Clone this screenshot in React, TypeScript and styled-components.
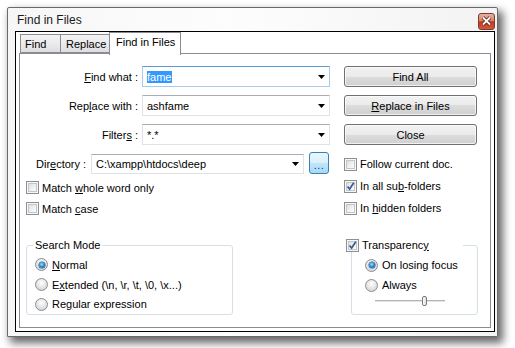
import styled, { createGlobalStyle } from "styled-components";

const GlobalStyle = createGlobalStyle`
  html, body {
    margin: 0;
    padding: 0;
    background: #ffffff;
  }
  body {
    font-family: "Liberation Sans", Arial, sans-serif;
    font-size: 11px;
    color: #000000;
  }
  * {
    box-sizing: border-box;
  }
`;

const Screen = styled.div`
  width: 515px;
  height: 348px;
  padding: 7px 0 0 7px;
  overflow: hidden;
`;

const Window = styled.div`
  width: 491px;
  height: 330px;
  display: flex;
  flex-direction: column;
  border: 1px solid #6a6a6a;
  border-radius: 2px 2px 0 0;
  background: linear-gradient(90deg, #f6f6f6 0%, #fdfdfd 45%, #f3f3f3 100%);
  box-shadow: 4px 5px 8px 1px rgba(0, 0, 0, 0.6);
`;

const TitleBar = styled.div`
  height: 23px;
  display: flex;
  align-items: center;
  justify-content: space-between;
  padding: 0 2px 0 9px;
`;

const Title = styled.div`
  font-size: 12px;
  color: #1a1a1a;
  margin-top: 1px;
`;

const CloseButton = styled.div`
  width: 17px;
  height: 17px;
  margin-top: 3px;
  display: flex;
  align-items: center;
  justify-content: center;
  border: 1px solid #7d3a2e;
  border-radius: 3px;
  background: linear-gradient(
    #eab1a2 0%,
    #dc806a 45%,
    #c4391c 52%,
    #d2583a 100%
  );
`;

const Frame = styled.div`
  flex: 1;
  margin: 0 2px 4px 7px;
  border: 1px solid #000000;
  background: #ffffff;
  display: flex;
  flex-direction: column;
`;

const TabStrip = styled.div`
  height: 21px;
  padding-left: 4px;
  display: flex;
  align-items: flex-end;
  position: relative;
  z-index: 1;
`;

const Tab = styled.div<{ $active?: boolean; $width: number; $pad: number }>`
  width: ${(p) => p.$width}px;
  height: ${(p) => (p.$active ? 23 : 19)}px;
  margin-left: ${(p) => (p.$active ? -1 : 0)}px;
  margin-bottom: ${(p) => (p.$active ? -2 : 0)}px;
  padding-left: ${(p) => p.$pad}px;
  padding-top: 3px;
  border: 1px solid #898c95;
  border-bottom: ${(p) => (p.$active ? "none" : "1px solid #898c95")};
  border-right: ${(p) => (p.$active ? "1px solid #898c95" : "none")};
  background: ${(p) =>
    p.$active ? "#ffffff" : "linear-gradient(#f3f3f3 0%, #ebebeb 50%, #dedede 100%)"};
  white-space: nowrap;
  overflow: hidden;
`;

const Panel = styled.div`
  flex: 1;
  margin: 0 3px 3px 3px;
  border: 1px solid #898c95;
  background: #ffffff;
  padding-top: 12px;
  display: grid;
  grid-template-columns: 311px 134px;
  column-gap: 13px;
  align-items: start;
`;

const Column = styled.div`
  display: flex;
  flex-direction: column;
`;

const FieldRow = styled.div<{ $first?: boolean }>`
  height: 21px;
  margin-top: ${(p) => (p.$first ? 0 : 8)}px;
  display: grid;
  grid-template-columns: 118px 188px;
  column-gap: 4px;
  align-items: center;
`;

const Label = styled.div`
  text-align: right;
  white-space: nowrap;
`;

const DirRow = styled.div`
  height: 21px;
  margin-top: 8px;
  padding-left: 16px;
  display: flex;
  align-items: center;
`;

const DirLabel = styled.div`
  width: 55px;
  white-space: nowrap;
`;

const Combo = styled.div<{ $focused?: boolean; $width?: number }>`
  width: ${(p) => (p.$width ? `${p.$width}px` : "100%")};
  height: ${(p) => (p.$width ? 20 : 21)}px;
  display: flex;
  align-items: center;
  padding-left: 4px;
  border: 1px solid ${(p) => (p.$focused ? "#a9cbe9" : "#dfe3e8")};
  border-top-color: ${(p) => (p.$focused ? "#5b9bd8" : "#abadb3")};
  background: #ffffff;
`;

const ComboText = styled.div`
  flex: 1;
  white-space: nowrap;
  overflow: hidden;
`;

const Selected = styled.span`
  background: #3399ff;
  color: #ffffff;
  padding: 1px 1px 1px 0;
`;

const ComboArrow = styled.div`
  width: 17px;
  height: 100%;
  display: flex;
  align-items: center;
  justify-content: center;
  padding-left: 1px;
`;

const BrowseButton = styled.div`
  width: 20px;
  height: 22px;
  margin-left: 5px;
  margin-top: -1px;
  display: flex;
  align-items: flex-end;
  justify-content: center;
  padding-bottom: 4px;
  border: 1px solid #3c7fb1;
  border-radius: 3px;
  background: linear-gradient(#eaf6fd 0%, #d9f0fc 50%, #bee6fd 50%, #a7d9f5 100%);
  color: #1c3a63;
  font-size: 11px;
  line-height: 8px;
  letter-spacing: 0.5px;
`;

const Button = styled.div<{ $first?: boolean }>`
  width: 133px;
  height: 21px;
  margin-top: ${(p) => (p.$first ? 0 : 8)}px;
  display: flex;
  align-items: center;
  justify-content: center;
  border: 1px solid #707070;
  border-radius: 3px;
  background: linear-gradient(#f2f2f2 0%, #ebebeb 50%, #dddddd 50%, #cfcfcf 100%);
  box-shadow: inset 0 0 0 1px rgba(255, 255, 255, 0.7);
`;

const CheckList = styled.div<{ $top: number; $indent: number }>`
  margin-top: ${(p) => p.$top}px;
  padding-left: ${(p) => p.$indent}px;
  display: flex;
  flex-direction: column;
`;

const CheckRow = styled.div<{ $height: number }>`
  height: ${(p) => p.$height}px;
  display: flex;
  align-items: center;
  gap: 3px;
  white-space: nowrap;
`;

const Box = styled.div`
  width: 13px;
  height: 13px;
  flex: none;
  border: 1px solid #8e8f8f;
  background: #f7f7f7;
  padding: 1px;
  position: relative;
`;

const BoxInner = styled.div`
  width: 100%;
  height: 100%;
  border: 1px solid #c3c6ca;
  background: linear-gradient(135deg, #dcdfe2 0%, #f0f1f2 55%, #fcfcfc 100%);
`;

const CheckMark = styled.svg`
  position: absolute;
  left: 0;
  top: 0;
`;

const RadioCircle = styled.div`
  width: 13px;
  height: 13px;
  flex: none;
  border-radius: 50%;
  border: 1px solid #8a8e94;
  background: radial-gradient(circle at 50% 35%, #ffffff 0%, #e8e8e8 45%, #c9cbce 100%);
  display: flex;
  align-items: center;
  justify-content: center;
`;

const RadioDot = styled.div`
  width: 6px;
  height: 6px;
  border-radius: 50%;
  background: radial-gradient(circle at 45% 40%, #a8e4ff 0%, #2f8fcf 45%, #0c4a8c 100%);
  box-shadow: 0 0 0 0.5px #1b4f86;
`;

const RadioRow = styled.div`
  height: 20px;
  display: flex;
  align-items: center;
  gap: 4px;
  white-space: nowrap;
`;

const GroupBox = styled.div<{ $indent: number; $width: number; $inset: number }>`
  position: relative;
  margin-top: 26px;
  margin-left: ${(p) => p.$indent}px;
  width: ${(p) => p.$width}px;
  height: 70px;
  border: 1px solid #d5dfe5;
  border-radius: 3px;
  display: flex;
  flex-direction: column;
  padding: 9px 0 0 ${(p) => p.$inset}px;
`;

const GroupCaption = styled.div<{ $left: number; $width?: number }>`
  position: absolute;
  top: -8px;
  left: ${(p) => p.$left}px;
  ${(p) => (p.$width ? `width: ${p.$width}px;` : "")}
  height: 14px;
  padding: 0 2px;
  background: #ffffff;
  display: flex;
  align-items: center;
  gap: 3px;
  white-space: nowrap;
`;

const Slider = styled.div`
  position: relative;
  width: 70px;
  height: 12px;
  margin-left: 10px;
`;

const SliderTrack = styled.div`
  position: absolute;
  left: 0;
  right: 0;
  top: 5px;
  height: 2px;
  border-top: 1px solid #b4b4b4;
  border-bottom: 1px solid #e6e6e6;
`;

const SliderThumb = styled.div`
  position: absolute;
  left: 47px;
  top: 1px;
  width: 5px;
  height: 10px;
  border: 1px solid #7a7a7a;
  border-radius: 2px;
  background: linear-gradient(90deg, #ffffff, #dcdcdc);
`;

const Key = styled.span`
  text-decoration: underline;
  text-underline-offset: 1px;
`;

const Arrow = () => (
  <svg width="7" height="4" viewBox="0 0 7 4">
    <path d="M0 0 H7 L3.5 4 Z" fill="#000000" />
  </svg>
);

const Check = ({ checked, children }: { checked?: boolean; children: React.ReactNode }) => (
  <>
    <Box>
      <BoxInner />
      {checked && (
        <CheckMark width="11" height="11" viewBox="0 0 11 11">
          <path
            d="M2.5 5.5 L4.6 8 L8.8 1.8"
            fill="none"
            stroke="#3b5b96"
            strokeWidth="1.7"
          />
        </CheckMark>
      )}
    </Box>
    <span>{children}</span>
  </>
);

const Radio = ({ on, children }: { on?: boolean; children: React.ReactNode }) => (
  <RadioRow>
    <RadioCircle>{on && <RadioDot />}</RadioCircle>
    <span>{children}</span>
  </RadioRow>
);

export default function App() {
  return (
    <Screen>
      <GlobalStyle />
      <Window>
        <TitleBar>
          <Title>Find in Files</Title>
          <CloseButton>
            <svg width="11" height="10" viewBox="0 0 11 10">
              <path d="M2 1.5 L9 8.5 M9 1.5 L2 8.5" stroke="#4a1a10" strokeWidth="3.4" />
              <path d="M2 1.5 L9 8.5 M9 1.5 L2 8.5" stroke="#ffffff" strokeWidth="1.8" />
            </svg>
          </CloseButton>
        </TitleBar>
        <Frame>
          <TabStrip>
            <Tab $width={40} $pad={4}>Find</Tab>
            <Tab $width={50} $pad={5}>Replace</Tab>
            <Tab $active $width={72} $pad={6}>Find in Files</Tab>
          </TabStrip>
          <Panel>
            <Column>
              <FieldRow $first>
                <Label>
                  <Key>F</Key>ind what :
                </Label>
                <Combo $focused>
                  <ComboText>
                    <Selected>fame</Selected>
                  </ComboText>
                  <ComboArrow>
                    <Arrow />
                  </ComboArrow>
                </Combo>
              </FieldRow>
              <FieldRow>
                <Label>
                  Rep<Key>l</Key>ace with :
                </Label>
                <Combo>
                  <ComboText>ashfame</ComboText>
                  <ComboArrow>
                    <Arrow />
                  </ComboArrow>
                </Combo>
              </FieldRow>
              <FieldRow>
                <Label>
                  Filter<Key>s</Key> :
                </Label>
                <Combo>
                  <ComboText>*.*</ComboText>
                  <ComboArrow>
                    <Arrow />
                  </ComboArrow>
                </Combo>
              </FieldRow>
              <DirRow>
                <DirLabel>
                  Dir<Key>e</Key>ctory :
                </DirLabel>
                <Combo $width={213}>
                  <ComboText>C:\xampp\htdocs\deep</ComboText>
                  <ComboArrow>
                    <Arrow />
                  </ComboArrow>
                </Combo>
                <BrowseButton>...</BrowseButton>
              </DirRow>
              <CheckList $top={3} $indent={6}>
                <CheckRow $height={21}>
                  <Check>
                    Match <Key>w</Key>hole word only
                  </Check>
                </CheckRow>
                <CheckRow $height={21}>
                  <Check>
                    Match <Key>c</Key>ase
                  </Check>
                </CheckRow>
              </CheckList>
              <GroupBox $indent={6} $width={207} $inset={8}>
                <GroupCaption $left={6}>Search Mode</GroupCaption>
                <Radio on>
                  <Key>N</Key>ormal
                </Radio>
                <Radio>
                  E<Key>x</Key>tended (\n, \r, \t, \0, \x...)
                </Radio>
                <Radio>
                  Re<Key>g</Key>ular expression
                </Radio>
              </GroupBox>
            </Column>
            <Column>
              <Button $first>Find All</Button>
              <Button>
                <span>
                  <Key>R</Key>eplace in Files
                </span>
              </Button>
              <Button>Close</Button>
              <CheckList $top={8} $indent={0}>
                <CheckRow $height={22}>
                  <Check>Follow current doc.</Check>
                </CheckRow>
                <CheckRow $height={22}>
                  <Check checked>
                    In all su<Key>b</Key>-folders
                  </Check>
                </CheckRow>
                <CheckRow $height={22}>
                  <Check>
                    In <Key>h</Key>idden folders
                  </Check>
                </CheckRow>
              </CheckList>
              <GroupBox $indent={7} $width={127} $inset={13}>
                <GroupCaption $left={-8} $width={119}>
                  <Check checked>
                    Transparenc<Key>y</Key>
                  </Check>
                </GroupCaption>
                <Radio on>On losing focus</Radio>
                <Radio>Always</Radio>
                <Slider>
                  <SliderTrack />
                  <SliderThumb />
                </Slider>
              </GroupBox>
            </Column>
          </Panel>
        </Frame>
      </Window>
    </Screen>
  );
}
